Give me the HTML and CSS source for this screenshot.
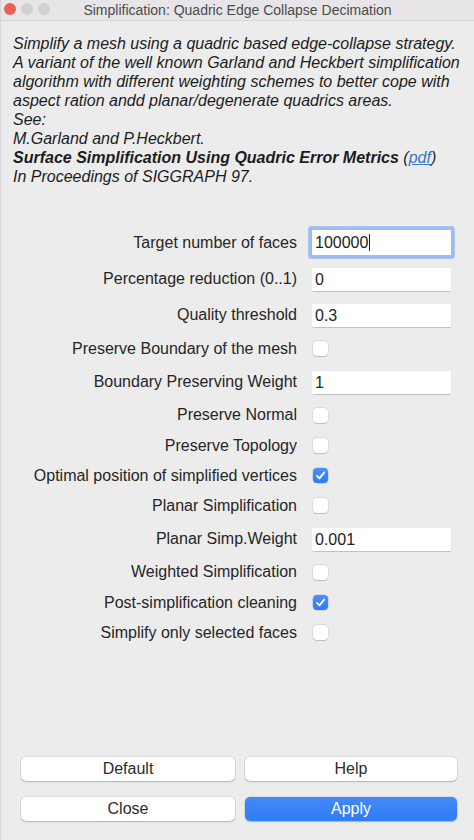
FILE: index.html
```html
<!DOCTYPE html>
<html lang="en">
<head>
<meta charset="utf-8">
<title>Simplification: Quadric Edge Collapse Decimation</title>
<link rel="stylesheet" href="styles.css">
</head>
<body>
<div class="window">
  <div class="titlebar">
    <div class="lights">
      <span class="light red"></span>
      <span class="light gray"></span>
      <span class="light gray"></span>
    </div>
    <div class="title">Simplification: Quadric Edge Collapse Decimation</div>
  </div>
  <div class="content">
    <div class="desc">
      Simplify a mesh using a quadric based edge-collapse strategy.<br>
      A variant of the well known Garland and Heckbert simplification<br>
      algorithm with different weighting schemes to better cope with<br>
      aspect ration andd planar/degenerate quadrics areas.<br>
      See:<br>
      M.Garland and P.Heckbert.<br>
      <b>Surface Simplification Using Quadric Error Metrics</b> (<a class="link" href="#">pdf</a>)<br>
      In Proceedings of SIGGRAPH 97.
    </div>
    <div class="form">
      <div class="lbl">Target number of faces</div>
      <div class="ctl text"><div class="field focused">100000<span class="caret"></span></div></div>

      <div class="lbl">Percentage reduction (0..1)</div>
      <div class="ctl text"><div class="field">0</div></div>

      <div class="lbl">Quality threshold</div>
      <div class="ctl text"><div class="field">0.3</div></div>

      <div class="lbl">Preserve Boundary of the mesh</div>
      <div class="ctl check"><span class="box"></span></div>

      <div class="lbl">Boundary Preserving Weight</div>
      <div class="ctl text"><div class="field">1</div></div>

      <div class="lbl">Preserve Normal</div>
      <div class="ctl check"><span class="box"></span></div>

      <div class="lbl">Preserve Topology</div>
      <div class="ctl check"><span class="box"></span></div>

      <div class="lbl">Optimal position of simplified vertices</div>
      <div class="ctl check"><span class="box checked"><svg viewBox="0 0 16 16" width="16" height="16"><path d="M4.2 8.4 L6.9 11.1 L11.8 4.9" fill="none" stroke="#fff" stroke-width="2" stroke-linecap="round" stroke-linejoin="round"/></svg></span></div>

      <div class="lbl">Planar Simplification</div>
      <div class="ctl check"><span class="box"></span></div>

      <div class="lbl">Planar Simp.Weight</div>
      <div class="ctl text"><div class="field">0.001</div></div>

      <div class="lbl">Weighted Simplification</div>
      <div class="ctl check"><span class="box"></span></div>

      <div class="lbl">Post-simplification cleaning</div>
      <div class="ctl check"><span class="box checked"><svg viewBox="0 0 16 16" width="16" height="16"><path d="M4.2 8.4 L6.9 11.1 L11.8 4.9" fill="none" stroke="#fff" stroke-width="2" stroke-linecap="round" stroke-linejoin="round"/></svg></span></div>

      <div class="lbl">Simplify only selected faces</div>
      <div class="ctl check"><span class="box"></span></div>
    </div>
    <div class="spacer"></div>
    <div class="buttons">
      <button class="btn">Default</button>
      <button class="btn">Help</button>
      <button class="btn">Close</button>
      <button class="btn primary">Apply</button>
    </div>
  </div>
</div>
</body>
</html>
```
FILE: styles.css
```css
html, body {
  margin: 0;
  padding: 0;
  width: 474px;
  height: 840px;
  overflow: hidden;
  background: #ececec;
}
body {
  font-family: "Liberation Sans", Arial, sans-serif;
  color: #242424;
}
.window {
  width: 474px;
  height: 840px;
  display: flex;
  flex-direction: column;
  background: #ececec;
  box-sizing: border-box;
  border-left: 1px solid #d6d6d6;
}
.titlebar {
  position: relative;
  height: 20px;
  background: #e7e5e7;
  border-bottom: 1px solid #d8d6d8;
  display: flex;
  align-items: center;
  justify-content: center;
  flex: none;
}
.lights {
  position: absolute;
  left: 3px;
  top: 3px;
  display: flex;
  gap: 5px;
}
.light {
  width: 12px;
  height: 12px;
  border-radius: 50%;
  display: block;
}
.light.red { background: #ec5f58; }
.light.gray { background: #d2d0d2; }
.title {
  font-size: 14px;
  color: #4b4b4b;
  line-height: 20px;
}
.content {
  flex: 1;
  display: flex;
  flex-direction: column;
  padding: 13px 18px 19px 12px;
}
.desc {
  font-style: italic;
  font-size: 16px;
  line-height: 19px;
  color: #1c1c1c;
  white-space: nowrap;
}
.desc b { font-weight: bold; }
.link {
  color: #3d74cf;
  text-decoration: underline;
}
.form {
  margin-top: 43.5px;
  display: grid;
  grid-template-columns: 284px 139px;
  column-gap: 15px;
  row-gap: 10px;
  align-items: center;
}
.lbl {
  text-align: right;
  font-size: 16px;
  line-height: 18px;
  color: #262626;
  white-space: nowrap;
}
.ctl {
  display: flex;
  align-items: center;
}
.ctl.text { height: 26.4px; }
.ctl.check { height: 20.2px; padding-left: 1px; }
.field {
  width: 139px;
  height: 23px;
  box-sizing: border-box;
  background: #fff;
  font-size: 16px;
  line-height: 23px;
  padding-left: 3px;
  color: #222;
  box-shadow: 0 0.5px 1px rgba(0, 0, 0, 0.18);
  display: flex;
  align-items: center;
}
.field.focused {
  width: 141px;
  height: 25px;
  box-shadow: 0 0 0 3.5px #9dbdf0, 0 0 0 4px #b9cff3;
  border-radius: 1px;
}
.caret {
  display: inline-block;
  width: 1px;
  height: 17px;
  background: #222;
  margin-left: 1px;
}
.box {
  width: 15px;
  height: 15px;
  box-sizing: border-box;
  border-radius: 4px;
  background: #fff;
  box-shadow: 0 0 0 0.5px rgba(0, 0, 0, 0.12), 0 0.5px 1px rgba(0, 0, 0, 0.15);
  display: flex;
  align-items: center;
  justify-content: center;
}
.box.checked {
  background: linear-gradient(#4a90f8, #2f7bf5);
  box-shadow: 0 0 0 0.5px rgba(0, 60, 160, 0.25);
}
.box svg { width: 15px; height: 15px; }
.spacer { flex: 1; }
.buttons {
  display: grid;
  grid-template-columns: 214px 212px;
  column-gap: 10px;
  row-gap: 16px;
  margin-left: 8px;
}
.btn {
  height: 24px;
  border: none;
  border-radius: 5px;
  background: #fff;
  font-family: "Liberation Sans", Arial, sans-serif;
  font-size: 16px;
  color: #2b2b2b;
  padding: 0;
  box-shadow: 0 0 0 0.5px rgba(0, 0, 0, 0.12), 0 1px 1.5px rgba(0, 0, 0, 0.2);
}
.btn.primary {
  background: linear-gradient(#4389f8, #2f7cf5);
  color: #fff;
}
```
